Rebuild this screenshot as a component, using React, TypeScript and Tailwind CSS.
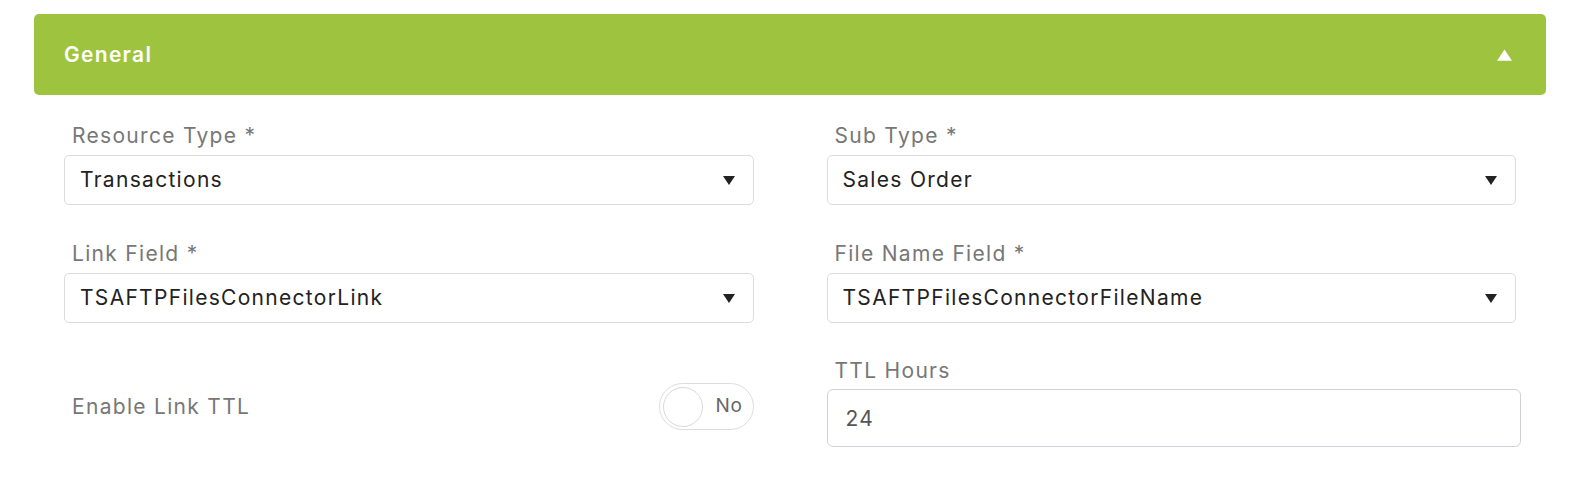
import { useState } from "react";

const font = { fontFamily: "Inter, 'Noto Sans', sans-serif" };

function Caret({ up = false, className = "" }: { up?: boolean; className?: string }) {
  return (
    <svg viewBox="0 0 12 9" className={className} aria-hidden>
      <path d={up ? "M6 0 L12 9 L0 9 Z" : "M0 0 L12 0 L6 9 Z"} fill="currentColor" />
    </svg>
  );
}

function SelectField({ label, value }: { label: string; value: string }) {
  return (
    <div className="flex flex-col">
      <label className="pl-2 text-[21px] leading-6 tracking-[1.3px] text-[#777]">{label}</label>
      <div className="mt-[7px] flex h-[50px] items-center justify-between rounded-[5px] border border-[#dcdcdc] bg-white pl-[15px] pr-[18px]">
        <span className="text-[21px] tracking-[1.3px] text-[#222]">{value}</span>
        <Caret className="h-[9px] w-[12px] text-[#222]" />
      </div>
    </div>
  );
}

export default function App() {
  const [open, setOpen] = useState(true);
  const [ttl, setTtl] = useState(false);

  return (
    <div className="min-h-[502px] bg-white pt-[14px] pr-[26px] pl-[34px]" style={font}>
      <button
        type="button"
        onClick={() => setOpen(!open)}
        className="flex h-[81px] w-full items-center justify-between rounded-[5px] bg-[#9dc33f] pl-[30px] pr-[34px] text-white"
      >
        <span className="text-[21px] font-semibold tracking-[1.3px]">General</span>
        <Caret up={open} className="h-[12px] w-[15px] text-white" />
      </button>
      {open && (
        <div className="grid grid-cols-2 gap-x-[73px] px-[30px] pt-[29px]">
          <SelectField label="Resource Type *" value="Transactions" />
          <SelectField label="Sub Type *" value="Sales Order" />
          <div className="mt-[37px]">
            <SelectField label="Link Field *" value="TSAFTPFilesConnectorLink" />
          </div>
          <div className="mt-[37px]">
            <SelectField label="File Name Field *" value="TSAFTPFilesConnectorFileName" />
          </div>
          <div className="mt-[60px] flex h-[47px] items-center justify-between pl-2">
            <span className="text-[21px] tracking-[1.3px] text-[#777]">Enable Link TTL</span>
            <button
              type="button"
              onClick={() => setTtl(!ttl)}
              className="flex h-[47px] w-[95px] items-center rounded-full border border-[#dddddd] bg-white p-[3px]"
            >
              <span className="h-[40px] w-[40px] rounded-full border border-[#d9d9d9] bg-white" />
              <span className="ml-[13px] text-[19px] tracking-[0.8px] text-[#666]">{ttl ? "Yes" : "No"}</span>
            </button>
          </div>
          <div className="mt-[36px] flex flex-col">
            <label className="pl-2 text-[21px] leading-6 tracking-[1.3px] text-[#777]">TTL Hours</label>
            <input
              defaultValue="24"
              className="mt-[6px] mr-[-5px] h-[58px] rounded-[6px] border border-[#cfd3d8] px-[18px] text-[21px] tracking-[1.3px] text-[#555] outline-none"
            />
          </div>
        </div>
      )}
    </div>
  );
}
